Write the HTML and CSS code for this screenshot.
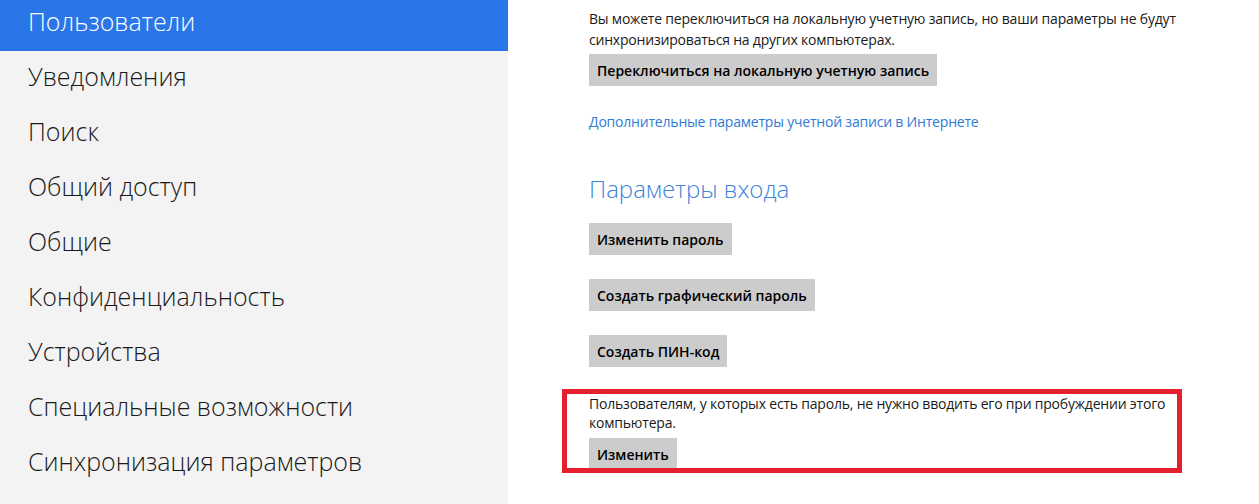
FILE: index.html
```html
<!DOCTYPE html>
<html lang="ru">
<head>
<meta charset="utf-8">
<title>Параметры ПК — Пользователи</title>
<link rel="stylesheet" href="styles.css">
</head>
<body>
<div class="app">
  <nav class="sidebar">
    <div class="nav-item active">Пользователи</div>
    <div class="nav-item">Уведомления</div>
    <div class="nav-item">Поиск</div>
    <div class="nav-item">Общий доступ</div>
    <div class="nav-item">Общие</div>
    <div class="nav-item">Конфиденциальность</div>
    <div class="nav-item">Устройства</div>
    <div class="nav-item">Специальные возможности</div>
    <div class="nav-item">Синхронизация параметров</div>
  </nav>
  <main class="content">
    <p class="text">Вы можете переключиться на локальную учетную запись, но ваши параметры не будут синхронизироваться на других компьютерах.</p>
    <button class="btn">Переключиться на локальную учетную запись</button>
    <a class="link" href="#">Дополнительные параметры учетной записи в Интернете</a>
    <h2 class="heading">Параметры входа</h2>
    <div class="btn-list">
      <button class="btn">Изменить пароль</button>
      <button class="btn">Создать графический пароль</button>
      <button class="btn">Создать ПИН-код</button>
    </div>
    <section class="highlight">
      <p class="text">Пользователям, у которых есть пароль, не нужно вводить его при пробуждении этого компьютера.</p>
      <button class="btn">Изменить</button>
    </section>
  </main>
</div>
</body>
</html>
```
FILE: styles.css
```css
html, body {
  margin: 0;
  padding: 0;
  background: #ffffff;
  height: 100%;
  overflow: hidden;
}
body {
  font-family: "Open Sans", "Noto Sans", "Liberation Sans", sans-serif;
  color: #000;
}
.app {
  display: flex;
  height: 504px;
}
.sidebar {
  width: 508px;
  flex: none;
  background: #f3f3f3;
  display: flex;
  flex-direction: column;
  margin-top: -4px;
}
.nav-item {
  height: 55px;
  line-height: 50px;
  padding-left: 28px;
  font-size: 25px;
  font-weight: 300;
  color: #1a1a1a;
  flex: none;
}
.nav-item.active {
  background: #2a75e8;
  color: #ffffff;
}
.content {
  flex: 1;
  padding-left: 81px;
  padding-top: 8px;
  display: flex;
  flex-direction: column;
  align-items: flex-start;
}
.text {
  margin: 0;
  width: 590px;
  font-size: 14px;
  letter-spacing: -0.2px;
  line-height: 21px;
  color: #1a1a1a;
}
.btn {
  font-family: inherit;
  font-size: 14px;
  font-weight: 600;
  color: #000;
  background: #cccccc;
  border: none;
  height: 32px;
  padding: 0 8px;
  margin: 4px 0 0;
}
.link {
  margin-top: 25px;
  font-size: 14px;
  letter-spacing: -0.2px;
  line-height: 21px;
  color: #2e7bd6;
  text-decoration: none;
}
.heading {
  margin: 41px 0 0;
  font-size: 24px;
  font-weight: 300;
  line-height: 32px;
  color: #3d83d9;
}
.btn-list {
  margin-top: 18px;
  display: flex;
  flex-direction: column;
  align-items: flex-start;
  gap: 24px;
}
.btn-list .btn {
  margin: 0;
}
.highlight {
  margin-top: 22px;
  margin-left: -27px;
  width: 588px;
  height: 74px;
  padding-left: 22px;
  border: 5px solid #e3202b;
  overflow: hidden;
}
.highlight .text {
  width: 585px;
  line-height: 19px;
}
.highlight .btn {
  margin-top: 6px;
}
```
